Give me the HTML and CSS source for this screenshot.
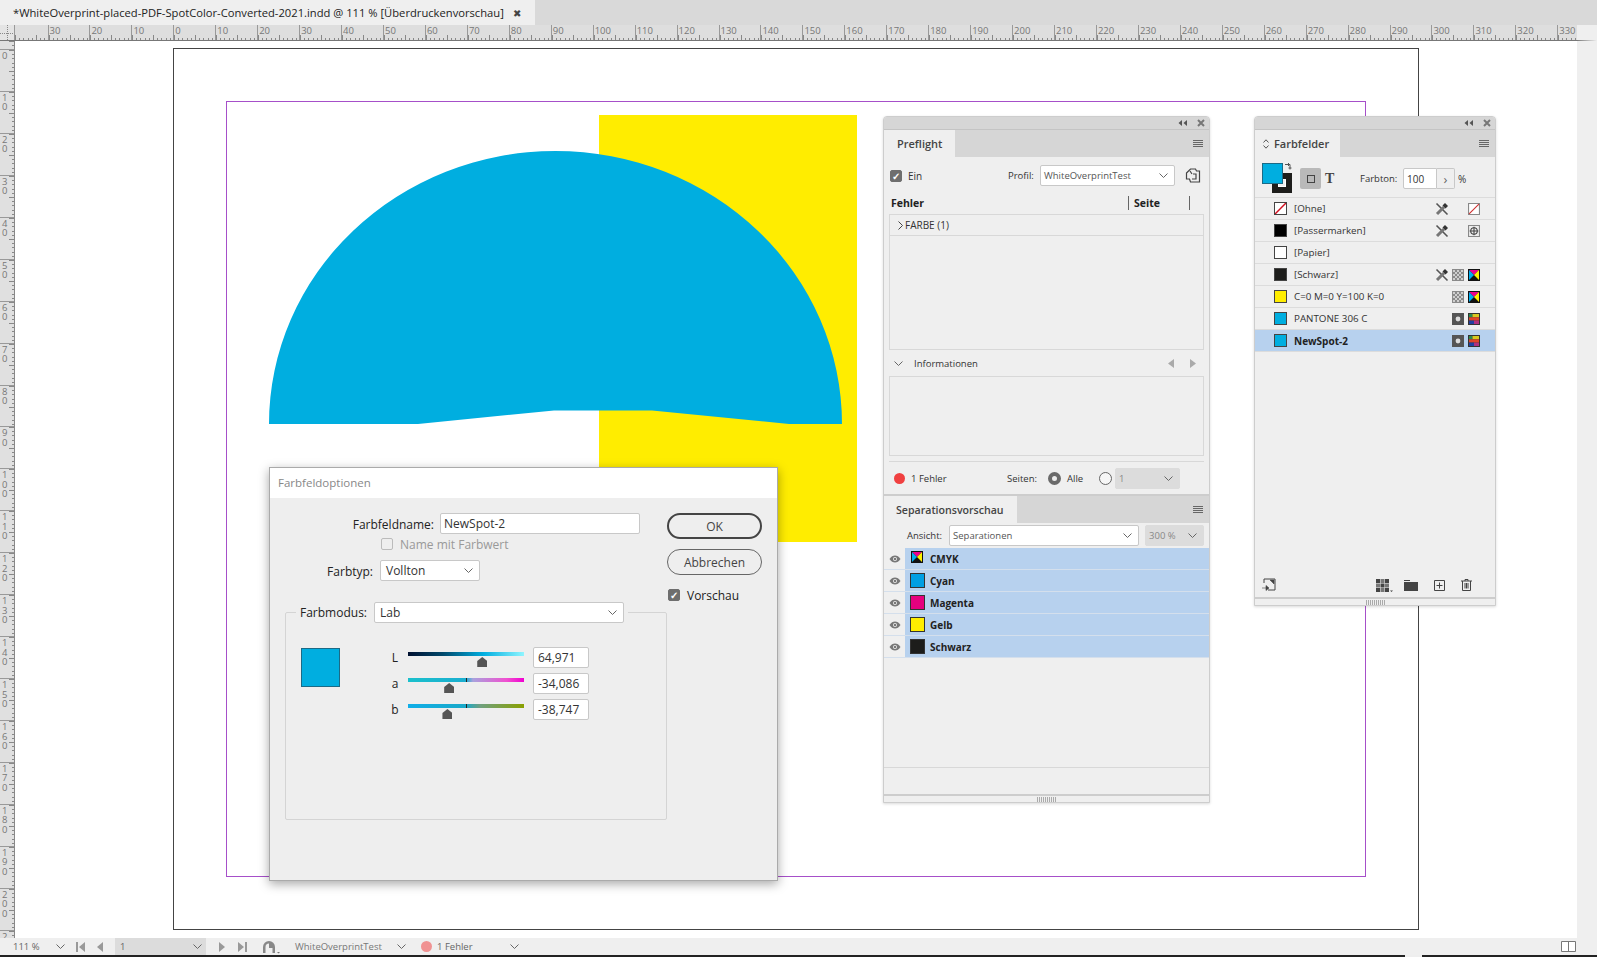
FILE: index.html
```html
<!DOCTYPE html>
<html lang="de">
<head>
  <meta charset="UTF-8">
  <title>Farbfeldoptionen</title>
  <link rel="stylesheet" href="styles.css">
</head>
<body>
  <svg class="defs" width="0" height="0">
    <symbol id="cmyk" viewBox="0 0 12 12">
      <rect width="12" height="12" fill="#111"/>
      <path d="M1 1h10L6 6z" fill="#ec008c"/>
      <path d="M1 1v10L6 6z" fill="#00aeef"/>
      <path d="M11 1v10L6 6z" fill="#fff200"/>
    </symbol>
    <symbol id="spot" viewBox="0 0 12 12">
      <rect width="12" height="12" fill="#555"/>
      <circle cx="6" cy="6" r="2.400" fill="#ddd"/>
    </symbol>
    <symbol id="lab" viewBox="0 0 12 12">
      <rect width="12" height="12" fill="#333"/>
      <rect x="1" y="1" width="3.500" height="3.300" fill="#2a8a50"/>
      <rect x="4.500" y="1" width="6.500" height="3.300" fill="#d8c820"/>
      <rect x="1" y="4.300" width="10" height="3.300" fill="#e04428"/>
      <rect x="1" y="7.600" width="5" height="3.400" fill="#2040a0"/>
      <rect x="6" y="7.600" width="5" height="3.400" fill="#b03080"/>
    </symbol>
    <symbol id="halftone" viewBox="0 0 12 12">
      <rect width="12" height="12" fill="#8a8a8a"/>
      <path d="M1 1h2v2H1zM5 1h2v2H5zM9 1h2v2H9zM3 3h2v2H3zM7 3h2v2H7zM1 5h2v2H1zM5 5h2v2H5zM9 5h2v2H9zM3 7h2v2H3zM7 7h2v2H7zM1 9h2v2H1zM5 9h2v2H5zM9 9h2v2H9z" fill="#cfcfcf"/>
    </symbol>
    <symbol id="nopencil" viewBox="0 0 14 14">
      <path d="M1.500 1.500l11 11" stroke="#555" stroke-width="1.600" fill="none"/>
      <path d="M2 12L9 5" stroke="#777" stroke-width="3" fill="none"/>
      <path d="M7.500 3.500l3 3L13 4 10 1z" fill="#333"/>
    </symbol>
    <symbol id="eye" viewBox="0 0 12 8">
      <path d="M.5 4C2 1.500 4 .5 6 .5s4 1 5.500 3.500C10 6.500 8 7.500 6 7.500S2 6.500.5 4z" fill="#777"/>
      <circle cx="6" cy="4" r="2" fill="#e6e6e6"/>
      <circle cx="6" cy="4" r="1" fill="#555"/>
    </symbol>
    <symbol id="chev" viewBox="0 0 9 5">
      <path d="M.5.5L4.500 4.500 8.500.5" fill="none" stroke="currentColor"/>
    </symbol>
    <symbol id="winbtns" viewBox="0 0 34 8">
      <path d="M11 1v6L7.500 4zM16 1v6l-3.500-3z" fill="#555"/>
      <path d="M27 1l6 6M33 1l-6 6" stroke="#777" stroke-width="2"/>
    </symbol>
  </svg>

  <div class="doc-tabs">
    <div class="doc-tab">*WhiteOverprint-placed-PDF-SpotColor-Converted-2021.indd @ 111 % [Überdruckenvorschau] <span class="doc-close">✖</span></div>
  </div>

  <div class="ruler-h">
    <div class="ruler-corner"></div>
    <span class="rh first"></span>
    <span class="rh">30</span><span class="rh">20</span><span class="rh">10</span><span class="rh">0</span>
    <span class="rh">10</span><span class="rh">20</span><span class="rh">30</span><span class="rh">40</span><span class="rh">50</span>
    <span class="rh">60</span><span class="rh">70</span><span class="rh">80</span><span class="rh">90</span><span class="rh">100</span>
    <span class="rh">110</span><span class="rh">120</span><span class="rh">130</span><span class="rh">140</span><span class="rh">150</span>
    <span class="rh">160</span><span class="rh">170</span><span class="rh">180</span><span class="rh">190</span><span class="rh">200</span>
    <span class="rh">210</span><span class="rh">220</span><span class="rh">230</span><span class="rh">240</span><span class="rh">250</span>
    <span class="rh">260</span><span class="rh">270</span><span class="rh">280</span><span class="rh">290</span><span class="rh">300</span>
    <span class="rh">310</span><span class="rh">320</span><span class="rh">330</span>
  </div>

  <div class="middle">
    <div class="ruler-v">
      <span class="rv first"></span>
      <span class="rv">0</span><span class="rv">10</span><span class="rv">20</span><span class="rv">30</span><span class="rv">40</span>
      <span class="rv">50</span><span class="rv">60</span><span class="rv">70</span><span class="rv">80</span><span class="rv">90</span>
      <span class="rv">100</span><span class="rv">110</span><span class="rv">120</span><span class="rv">130</span><span class="rv">140</span>
      <span class="rv">150</span><span class="rv">160</span><span class="rv">170</span><span class="rv">180</span><span class="rv">190</span>
      <span class="rv">200</span><span class="rv">210</span>
    </div>
    <div class="canvas"></div>
    <div class="side-strip"></div>
  </div>

  <div class="status">
    <span class="sb-zoom">111 %</span>
    <span class="sb-chev1"><svg class="chev"><use href="#chev"/></svg></span>
    <span class="sb-first"><svg width="9" height="10" viewBox="0 0 9 10"><path d="M0 0h2v10H0zM9 0v10L3 5z" fill="#999"/></svg></span>
    <span class="sb-prev"><svg width="6" height="10" viewBox="0 0 6 10"><path d="M6 0v10L0 5z" fill="#999"/></svg></span>
    <span class="sb-select">1 <svg class="chev"><use href="#chev"/></svg></span>
    <span class="sb-next"><svg width="6" height="10" viewBox="0 0 6 10"><path d="M0 0v10l6-5z" fill="#999"/></svg></span>
    <span class="sb-last"><svg width="9" height="10" viewBox="0 0 9 10"><path d="M0 0v10l6-5zM7 0h2v10H7z" fill="#999"/></svg></span>
    <span class="sb-pf"><svg width="18" height="14" viewBox="0 0 18 14"><path d="M1 13V7a6 6 0 0 1 12 0v6h-2.500V8H7V3.500A3.500 3.500 0 0 0 3.500 7v6z" fill="#888"/><path d="M15 12h3l-1.500 1.500z" fill="#777"/></svg></span>
    <span class="sb-profile">WhiteOverprintTest</span>
    <span class="sb-chev"><svg class="chev"><use href="#chev"/></svg></span>
    <span class="sb-dot"></span>
    <span class="sb-err">1 Fehler</span>
    <span class="sb-chev"><svg class="chev"><use href="#chev"/></svg></span>
    <span class="sb-fill"></span>
    <svg class="sb-split" viewBox="0 0 15 11"><path d="M.5.5h14v10H.5zM7.500.5v10" fill="#fff" stroke="#777"/></svg>
  </div>
  <div class="taskbar"><span class="taskbar-gap"></span></div>

  <!-- Dokumentseite -->
  <div class="page"></div>
  <div class="margins"></div>
  <div class="yellow"></div>
  <svg class="shape" viewBox="0 0 1597 957" width="1597" height="957">
    <path d="M269 424A286.500 273 0 0 1 842 424H789L652 410.500H554L418 424Z" fill="#00aee0"/>
  </svg>

  <!-- Farbfeldoptionen -->
  <div class="dialog">
    <div class="dialog-title">Farbfeldoptionen</div>
    <div class="dialog-body">
      <div class="dialog-form">
        <div class="form-row">
          <label class="lbl lbl-name">Farbfeldname:</label>
          <div class="field field-name">NewSpot-2</div>
        </div>
        <div class="check-row disabled">
          <span class="box"></span>
          <span>Name mit Farbwert</span>
        </div>
        <div class="form-row type-row">
          <label class="lbl lbl-type">Farbtyp:</label>
          <div class="field field-type">Vollton <svg class="chev"><use href="#chev"/></svg></div>
        </div>
        <fieldset class="mode">
          <legend class="mode-legend">
            <span>Farbmodus:</span>
            <span class="field field-mode">Lab <svg class="chev"><use href="#chev"/></svg></span>
          </legend>
          <div class="mode-body">
            <div class="mode-swatch"></div>
            <div class="sliders">
              <div class="slider-row">
                <span class="slider-lbl">L</span>
                <div class="slider slider-l"><i class="thumb" style="left: 64%"></i></div>
                <div class="field field-num">64,971</div>
              </div>
              <div class="slider-row">
                <span class="slider-lbl">a</span>
                <div class="slider slider-a"><b class="mid"></b><i class="thumb" style="left: 35.500%"></i></div>
                <div class="field field-num">-34,086</div>
              </div>
              <div class="slider-row">
                <span class="slider-lbl">b</span>
                <div class="slider slider-b"><b class="mid"></b><i class="thumb" style="left: 34%"></i></div>
                <div class="field field-num">-38,747</div>
              </div>
            </div>
          </div>
        </fieldset>
      </div>
      <div class="dialog-side">
        <button class="btn btn-ok">OK</button>
        <button class="btn">Abbrechen</button>
        <div class="check-row preview">
          <span class="box on">✓</span>
          <span>Vorschau</span>
        </div>
      </div>
    </div>
  </div>

  <!-- Preflight + Separationsvorschau -->
  <div class="panel panel-pf">
    <div class="panel-head"><svg class="winbtns"><use href="#winbtns"/></svg></div>
    <div class="panel-tabs">
      <div class="panel-tab tab-pf">Preflight</div>
      <div class="menu"><i></i><i></i><i></i><i></i></div>
    </div>
    <div class="pf-top">
      <span class="box on">✓</span>
      <span class="pf-ein">Ein</span>
      <span class="pf-profil">Profil:</span>
      <span class="field field-profil">WhiteOverprintTest <svg class="chev"><use href="#chev"/></svg></span>
      <svg class="pf-doc" width="16" height="16" viewBox="0 0 16 16"><path d="M1.500 5l4-4h5l1 2h3v11h-9l-1-3h-3zM8 6h3v5H7M5 3l2 3" fill="none" stroke="#444" stroke-width="1.200"/></svg>
    </div>
    <div class="pf-cols">
      <span class="pf-col-err">Fehler</span>
      <span class="pf-col-page">Seite</span>
    </div>
    <div class="pf-list">
      <div class="pf-item"><svg width="5" height="9" viewBox="0 0 5 9"><path d="M.5.5l4 4-4 4" fill="none" stroke="#444"/></svg> FARBE (1)</div>
    </div>
    <div class="pf-info">
      <svg class="chev"><use href="#chev"/></svg>
      <span class="pf-info-txt">Informationen</span>
      <svg class="pf-arrow" width="6" height="9" viewBox="0 0 6 9"><path d="M6 0v9L0 4.500z" fill="#aaa"/></svg>
      <svg class="pf-arrow" width="6" height="9" viewBox="0 0 6 9"><path d="M0 0v9l6-4.500z" fill="#aaa"/></svg>
    </div>
    <div class="pf-infobox"></div>
    <div class="pf-status">
      <span class="err-dot"></span>
      <span class="err-txt">1 Fehler</span>
      <span class="seiten">Seiten:</span>
      <span class="radio on"></span>
      <span class="alle">Alle</span>
      <span class="radio"></span>
      <span class="field field-dis field-page">1 <svg class="chev"><use href="#chev"/></svg></span>
    </div>

    <div class="sep-split"></div>
    <div class="panel-tabs tabs-sep">
      <div class="panel-tab tab-sep">Separationsvorschau</div>
      <div class="menu"><i></i><i></i><i></i><i></i></div>
    </div>
    <div class="sep-view">
      <span>Ansicht:</span>
      <span class="field field-view">Separationen <svg class="chev"><use href="#chev"/></svg></span>
      <span class="field field-dis field-pct">300 % <svg class="chev"><use href="#chev"/></svg></span>
    </div>
    <div class="sep-list">
      <div class="sep-row"><span class="sep-eye"><svg width="12" height="8"><use href="#eye"/></svg></span><span class="sep-name"><svg class="sep-cmyk"><use href="#cmyk"/></svg>CMYK</span></div>
      <div class="sep-row"><span class="sep-eye"><svg width="12" height="8"><use href="#eye"/></svg></span><span class="sep-name"><i class="sep-swatch sw-cyan"></i>Cyan</span></div>
      <div class="sep-row"><span class="sep-eye"><svg width="12" height="8"><use href="#eye"/></svg></span><span class="sep-name"><i class="sep-swatch sw-magenta"></i>Magenta</span></div>
      <div class="sep-row"><span class="sep-eye"><svg width="12" height="8"><use href="#eye"/></svg></span><span class="sep-name"><i class="sep-swatch sw-yellow"></i>Gelb</span></div>
      <div class="sep-row"><span class="sep-eye"><svg width="12" height="8"><use href="#eye"/></svg></span><span class="sep-name"><i class="sep-swatch sw-black"></i>Schwarz</span></div>
    </div>
    <div class="sep-fill"></div>
    <div class="sep-foot"></div>
    <div class="panel-grip"><span class="grip"></span></div>
  </div>

  <!-- Farbfelder -->
  <div class="panel panel-ff">
    <div class="panel-head"><svg class="winbtns"><use href="#winbtns"/></svg></div>
    <div class="panel-tabs">
      <div class="panel-tab tab-ff">
        <svg width="6" height="10" viewBox="0 0 6 10"><path d="M.5 3.500L3 .8l2.500 2.700M.5 6.500L3 9.200l2.500-2.700" fill="none" stroke="#555"/></svg>
        Farbfelder
      </div>
      <div class="menu"><i></i><i></i><i></i><i></i></div>
    </div>
    <div class="ff-tools">
      <div class="proxy"><span class="proxy-stroke"></span><span class="proxy-fill"></span>
        <svg class="proxy-swap" width="7" height="7" viewBox="0 0 7 7"><path d="M0 1.500h5v5M3.500 0v3M3.500 5h3" fill="none" stroke="#555"/></svg>
      </div>
      <div class="fmt-btn"><i></i></div>
      <span class="fmt-t">T</span>
      <span class="tint-lbl">Farbton:</span>
      <span class="field field-tint">100</span><span class="tint-step">›</span>
      <span class="tint-pct">%</span>
    </div>
    <div class="ff-list">
      <div class="ff-row">
        <svg class="ff-swatch" viewBox="0 0 13 13"><rect width="13" height="13" fill="#fff"/><path d="M0 13L13 0" stroke="#d01020" stroke-width="1.500"/><rect x=".5" y=".5" width="12" height="12" fill="none" stroke="#444"/></svg>
        <span class="ff-name">[Ohne]</span>
        <span class="ff-slot"><svg class="ff-pencil"><use href="#nopencil"/></svg></span><span class="ff-slot"></span>
        <span class="ff-slot"><svg class="ff-icon" viewBox="0 0 11 11"><path d="M.5.5h10v10H.5z" fill="#fff" stroke="#888"/><path d="M1 10L10 1" stroke="#d03030"/></svg></span>
      </div>
      <div class="ff-row">
        <i class="ff-swatch sw-reg"></i>
        <span class="ff-name">[Passermarken]</span>
        <span class="ff-slot"><svg class="ff-pencil"><use href="#nopencil"/></svg></span><span class="ff-slot"></span>
        <span class="ff-slot"><svg class="ff-icon" viewBox="0 0 11 11"><path d="M.5.5h10v10H.5z" fill="#eee" stroke="#888"/><circle cx="5.500" cy="5.500" r="3" fill="none" stroke="#444"/><path d="M5.500 1.500v8M1.500 5.500h8" stroke="#444"/></svg></span>
      </div>
      <div class="ff-row">
        <i class="ff-swatch sw-paper"></i>
        <span class="ff-name">[Papier]</span>
      </div>
      <div class="ff-row">
        <i class="ff-swatch sw-black"></i>
        <span class="ff-name">[Schwarz]</span>
        <span class="ff-slot"><svg class="ff-pencil"><use href="#nopencil"/></svg></span>
        <span class="ff-slot"><svg class="ff-icon"><use href="#halftone"/></svg></span>
        <span class="ff-slot"><svg class="ff-icon"><use href="#cmyk"/></svg></span>
      </div>
      <div class="ff-row">
        <i class="ff-swatch sw-yellow"></i>
        <span class="ff-name">C=0 M=0 Y=100 K=0</span>
        <span class="ff-slot"><svg class="ff-icon"><use href="#halftone"/></svg></span>
        <span class="ff-slot"><svg class="ff-icon"><use href="#cmyk"/></svg></span>
      </div>
      <div class="ff-row">
        <i class="ff-swatch sw-spot"></i>
        <span class="ff-name">PANTONE 306 C</span>
        <span class="ff-slot"><svg class="ff-icon"><use href="#spot"/></svg></span>
        <span class="ff-slot"><svg class="ff-icon"><use href="#lab"/></svg></span>
      </div>
      <div class="ff-row selected">
        <i class="ff-swatch sw-spot"></i>
        <span class="ff-name">NewSpot-2</span>
        <span class="ff-slot"><svg class="ff-icon"><use href="#spot"/></svg></span>
        <span class="ff-slot"><svg class="ff-icon"><use href="#lab"/></svg></span>
      </div>
    </div>
    <div class="ff-fill"></div>
    <div class="ff-foot">
      <svg width="14" height="14" viewBox="0 0 14 14"><path d="M2 5V1h11v11H6" fill="none" stroke="#444"/><path d="M8 2h4v4zM0 10h6M4 7.500L7 10l-3 2.500z" fill="#444" stroke="#444" stroke-width=".6"/></svg>
      <span class="ff-foot-gap"></span>
      <svg class="ff-grid" width="17" height="13" viewBox="0 0 17 13"><path d="M0 0h4v4H0zM9 0h4v4H9zM4.500 4.500h4v4h-4zM0 9h4v4H0zM9 9h4v4H9z" fill="#444"/><path d="M4.500 0h4v4h-4zM0 4.500h4v4H0zM9 4.500h4v4H9zM4.500 9h4v4h-4z" fill="#777"/><path d="M14 11.500h3l-1.500 1.500z" fill="#444"/></svg>
      <svg width="14" height="11" viewBox="0 0 14 11"><path d="M0 0h6v1H0zM0 2h14v9H0z" fill="#444"/></svg>
      <svg width="11" height="11" viewBox="0 0 11 11"><path d="M.5.5h10v10H.5zM5.500 2.500v6M2.500 5.500h6" fill="none" stroke="#444"/></svg>
      <svg width="11" height="12" viewBox="0 0 11 12"><path d="M0 2h11M4 2V.5h3V2M1.500 2v9.500h8V2M4 4v5.500M5.500 4v5.500M7 4v5.500" fill="none" stroke="#444"/></svg>
    </div>
    <div class="panel-grip"><span class="grip"></span></div>
  </div>
</body>
</html>
```

FILE: styles.css
```css
* {
  box-sizing: border-box;
}

body {
  position: relative;
  display: flex;
  flex-direction: column;
  width: 1597px;
  height: 957px;
  margin: 0;
  overflow: hidden;
  background-color: #fff;
  font-family: "Open Sans", "Noto Sans", sans-serif;
  font-size: 11px;
  color: #333;
}

.defs {
  position: absolute;
}

.chev {
  width: 9px;
  height: 5px;
  color: #666;
  flex: none;
}

/* Dokument-Tab */
.doc-tabs {
  flex: 0 0 25px;
  background-color: #d9d9d9;
}

.doc-tab {
  display: flex;
  align-items: center;
  width: 535px;
  height: 25px;
  padding-left: 13px;
  background-color: #efefef;
  font-size: 11.200px;
  color: #222;
  white-space: pre;
}

.doc-close {
  margin-left: 6px;
  font-size: 10px;
  color: #444;
}

/* Lineale */
.ruler-h {
  display: flex;
  flex: 0 0 16px;
  background-color: #dedede;
  border-right: 20px solid #efefef;
  border-bottom: 1px solid #777;
  overflow: hidden;
}

.ruler-corner {
  flex: 0 0 15px;
  background:
    repeating-linear-gradient(to right, #888 0 1px, transparent 1px 2px) left 8px / 100% 1px no-repeat,
    repeating-linear-gradient(to bottom, #888 0 1px, transparent 1px 2px) 7px top / 1px 100% no-repeat,
    #e4e4e4;
  border-right: 1px solid #999;
}

.rh {
  flex: 0 0 41.940px;
  padding-left: 1px;
  border-left: 1px solid #999;
  font-size: 9.500px;
  line-height: 11px;
  color: #777;
  background:
    repeating-linear-gradient(to right, #888 0 1px, transparent 1px 20.970px) left bottom / 100% 5px no-repeat,
    repeating-linear-gradient(to right, #888 0 1px, transparent 1px 4.194px) left bottom / 100% 2px no-repeat;
}

.rh.first {
  flex-basis: 32.500px;
  border-left: 0;
}

.middle {
  display: flex;
  flex: 1;
  min-height: 0;
}

.ruler-v {
  display: flex;
  flex-direction: column;
  flex: 0 0 15px;
  overflow: hidden;
  background-color: #e0e0e0;
  border-right: 1px solid #888;
}

.rv {
  flex: 0 0 41.940px;
  width: 100%;
  padding: 1px 6px 0 2px;
  border-top: 1px solid #999;
  font-size: 9.500px;
  line-height: 9.500px;
  color: #777;
  word-break: break-all;
  background:
    repeating-linear-gradient(to bottom, #888 0 1px, transparent 1px 20.970px) right top / 5px 100% no-repeat,
    repeating-linear-gradient(to bottom, #888 0 1px, transparent 1px 4.194px) right top / 2px 100% no-repeat;
}

.rv.first {
  flex-basis: 8px;
  border-top: 0;
}

.canvas {
  flex: 1;
  background-color: #fff;
}

.side-strip {
  flex: 0 0 20px;
  background-color: #efefef;
}

/* Statusleiste */
.status {
  display: flex;
  align-items: center;
  flex: 0 0 17px;
  padding-left: 13px;
  background-color: #efefef;
  font-size: 9.500px;
  color: #666;
}

.sb-zoom { width: 43px; }
.sb-chev1 { display: flex; width: 20px; }
.sb-first { display: flex; width: 21px; }
.sb-prev { display: flex; width: 18px; }

.sb-select {
  display: flex;
  align-items: center;
  justify-content: space-between;
  width: 91px;
  height: 17px;
  padding: 0 4px 0 5px;
  background-color: #dcdcdc;
}

.sb-next { display: flex; width: 32px; padding-left: 13px; }
.sb-last { display: flex; width: 24px; }
.sb-pf { display: flex; width: 33px; }
.sb-profile { width: 102px; color: #777; }
.sb-chev { display: flex; width: 24px; }
.sb-err { width: 73px; margin-left: 5px; }

.sb-dot {
  width: 11px;
  height: 11px;
  border-radius: 50%;
  background-color: #f09292;
}

.sb-fill { flex: 1; }

.sb-split {
  width: 15px;
  height: 11px;
  margin-right: 21px;
}

.taskbar {
  flex: 0 0 2px;
  padding-left: 1405px;
  background-color: #222;
}

.taskbar-gap {
  display: block;
  width: 17px;
  height: 2px;
  background-color: #eee;
}

/* Dokumentseite: freie Flaeche */
.page {
  position: absolute;
  left: 173px;
  top: 48px;
  width: 1246px;
  height: 882px;
  border: 1.500px solid #444;
}

.margins {
  position: absolute;
  left: 226px;
  top: 101px;
  width: 1140px;
  height: 776px;
  border: 1px solid #a64fc9;
}

.yellow {
  position: absolute;
  left: 599px;
  top: 115px;
  width: 258px;
  height: 427px;
  background-color: #ffed00;
}

.shape {
  position: absolute;
  left: 0;
  top: 0;
}

/* gemeinsame Felder */
.field {
  display: flex;
  align-items: center;
  justify-content: space-between;
  height: 21px;
  padding: 0 6px 0 3px;
  background-color: #fff;
  border: 1px solid #c8c8c8;
  border-radius: 2px;
  color: #333;
}

.field-dis {
  background-color: #dcdcdc;
  border-color: #dcdcdc;
  color: #888;
}

.box {
  display: flex;
  align-items: center;
  justify-content: center;
  flex: none;
  width: 12px;
  height: 12px;
  background-color: #eee;
  border: 1px solid #bbb;
  border-radius: 2px;
  font-size: 10px;
  font-weight: 700;
  color: #fff;
}

.box.on {
  background-color: #6e6e6e;
  border-color: #6e6e6e;
}

/* Dialog */
.dialog {
  position: absolute;
  left: 269px;
  top: 467px;
  width: 509px;
  height: 414px;
  background-color: #eee;
  border: 1px solid #aaa;
  box-shadow: 0 3px 10px rgba(0, 0, 0, 0.35);
  font-size: 12px;
  color: #222;
}

.dialog-title {
  height: 30px;
  padding: 7px 0 0 8px;
  background-color: #fff;
  font-size: 11.500px;
  color: #888;
}

.dialog-body {
  display: flex;
  padding: 15px 0 0 15px;
}

.dialog-form {
  width: 382px;
}

.form-row {
  display: flex;
  align-items: center;
}

.lbl {
  padding-top: 2px;
  text-align: right;
}

.lbl-name { width: 149px; margin-right: 6px; }
.lbl-type { width: 88px; margin-right: 7px; }
.field-name { width: 200px; }
.field-type { width: 100px; padding-left: 5px; }

.check-row {
  display: flex;
  align-items: center;
  gap: 7px;
  height: 12px;
}

.dialog-form .check-row {
  margin: 4px 0 0 96px;
}

.check-row.disabled {
  color: #999;
}

.type-row {
  margin-top: 10px;
}

.mode {
  width: 382px;
  height: 218px;
  margin: 21px 0 0;
  padding: 0;
  border: 1px solid #d4d4d4;
  border-radius: 2px;
}

.mode-legend {
  display: flex;
  align-items: center;
  gap: 7px;
  margin-left: 10px;
  padding: 0 4px;
}

.field-mode {
  width: 250px;
  padding-left: 5px;
}

.mode-body {
  display: flex;
  padding: 24px 0 0 15px;
}

.mode-swatch {
  flex: none;
  width: 39px;
  height: 39px;
  margin-top: 1px;
  background-color: #00aee0;
  border: 1px solid #1b6a86;
}

.sliders {
  display: flex;
  flex-direction: column;
  gap: 5px;
  margin-left: 45px;
}

.slider-row {
  display: flex;
  align-items: center;
  height: 21px;
}

.slider-lbl {
  width: 16px;
  padding-left: 4px;
  text-align: center;
}

.slider {
  position: relative;
  width: 116px;
  height: 4px;
  margin: -7px 9px 0 7px;
}

.slider-l { background: linear-gradient(90deg, #001030, #00486b 30%, #00aee0 65%, #8ff5ff); }
.slider-a { background: linear-gradient(90deg, #1bc0cc, #1aaed0 50%, #a9a2dd 56%, #f050d0 85%, #f000d0); }
.slider-b { background: linear-gradient(90deg, #10aee8, #1aa9c8 50%, #6fa080 62%, #8aa000); }

.mid {
  position: absolute;
  left: 50%;
  top: 0;
  width: 1px;
  height: 4px;
  background-color: #222;
}

.thumb {
  position: absolute;
  top: 5px;
  width: 10px;
  height: 10px;
  margin-left: -5px;
  background-color: #555;
  clip-path: polygon(50% 0, 100% 40%, 100% 100%, 0 100%, 0 40%);
}

.field-num {
  width: 56px;
  padding-left: 4px;
}

.dialog-side {
  display: flex;
  flex-direction: column;
  width: 95px;
}

.btn {
  height: 26px;
  padding: 0;
  background-color: transparent;
  border: 1px solid #666;
  border-radius: 13px;
  font-family: inherit;
  font-size: 12px;
  color: #444;
}

.btn + .btn {
  margin-top: 10px;
}

.btn-ok {
  border: 2px solid #444;
}

.preview {
  margin: 14px 0 0 1px;
}

/* Panels */
.panel {
  position: absolute;
  top: 116px;
  display: flex;
  flex-direction: column;
  background-color: #efefef;
  border: 1px solid #cdcdcd;
  border-radius: 4px 4px 0 0;
  box-shadow: 0 1px 3px rgba(0, 0, 0, 0.15);
  font-size: 10px;
  color: #333;
}

.panel-pf {
  left: 883px;
  width: 327px;
  height: 687px;
}

.panel-ff {
  left: 1254px;
  width: 242px;
  height: 490px;
}

.panel-head {
  display: flex;
  align-items: center;
  justify-content: flex-end;
  flex: 0 0 13px;
  padding-right: 4px;
  background-color: #d6d6d6;
  border-radius: 3px 3px 0 0;
  border-bottom: 1px solid #c4c4c4;
}

.winbtns {
  width: 34px;
  height: 8px;
}

.panel-tabs {
  display: flex;
  align-items: center;
  justify-content: space-between;
  flex: 0 0 27px;
  padding-right: 6px;
  background-color: #d6d6d6;
}

.panel-tab {
  display: flex;
  align-items: center;
  height: 100%;
  background-color: #efefef;
  font-size: 11px;
  font-weight: 600;
  color: #444;
}

.tab-pf { width: 71px; padding-left: 13px; }
.tab-sep { width: 133px; padding-left: 12px; font-size: 10.600px; }
.tab-ff { width: 85px; padding-left: 8px; gap: 5px; }

.menu {
  display: flex;
  flex-direction: column;
  gap: 1px;
  width: 10px;
}

.menu i {
  height: 1px;
  background-color: #666;
}

/* Preflight */
.pf-top {
  display: flex;
  align-items: center;
  flex: 0 0 21px;
  margin-top: 8px;
  padding-left: 6px;
}

.pf-ein { width: 20px; margin-left: 6px; }
.pf-profil { width: 25px; margin-left: 80px; font-size: 9.500px; white-space: nowrap; }
.field-profil { flex: none; width: 135px; margin-left: 7px; font-size: 9.500px; color: #555; }
.pf-doc { flex: none; margin-left: 10px; }

.pf-cols {
  display: flex;
  align-items: center;
  flex: 0 0 17px;
  margin-top: 8px;
  padding-left: 7px;
  font-size: 10.500px;
  font-weight: 700;
  color: #222;
}

.pf-col-err { width: 237px; }

.pf-col-page {
  width: 62px;
  padding-left: 5px;
  border-left: 1px solid #666;
  border-right: 1px solid #666;
}

.pf-list {
  flex: 0 0 136px;
  margin: 3px 5px 0;
  border: 1px solid #d8d8d8;
}

.pf-item {
  display: flex;
  align-items: center;
  gap: 2px;
  height: 21px;
  padding-left: 8px;
  border-bottom: 1px solid #d8d8d8;
}

.pf-info {
  display: flex;
  align-items: center;
  flex: 0 0 26px;
  padding: 0 13px 0 10px;
}

.pf-info-txt { flex: 1; margin-left: 11px; font-size: 9.500px; }
.pf-arrow + .pf-arrow { margin-left: 16px; }

.pf-infobox {
  flex: 0 0 80px;
  margin: 0 5px;
  border: 1px solid #d8d8d8;
}

.pf-status {
  display: flex;
  align-items: center;
  flex: 0 0 33px;
  margin: 5px 5px 0;
  padding-left: 5px;
  border-top: 1px solid #d8d8d8;
  font-size: 9.500px;
}

.err-dot {
  width: 11px;
  height: 11px;
  border-radius: 50%;
  background-color: #f04040;
}

.err-txt { width: 96px; margin-left: 6px; }
.seiten { width: 41px; }
.alle { width: 32px; margin-left: 6px; }

.radio {
  flex: none;
  width: 13px;
  height: 13px;
  background-color: #f6f6f6;
  border: 1px solid #666;
  border-radius: 50%;
}

.radio.on {
  background-color: #eee;
  border: 4px solid #6a6a6a;
}

.field-page {
  width: 65px;
  margin-left: 3px;
}

/* Separationsvorschau */
.sep-split {
  flex: 0 0 2px;
  background-color: #cdcdcd;
}

.sep-view {
  display: flex;
  align-items: center;
  flex: 0 0 25px;
  padding-left: 23px;
  font-size: 9.500px;
}

.field-view { width: 190px; margin-left: 7px; color: #555; }
.field-pct { width: 59px; margin-left: 6px; }

.sep-list {
  flex: none;
}

.sep-row {
  display: flex;
  height: 22px;
  border-bottom: 1px solid #d4dfec;
}

.sep-eye {
  display: flex;
  align-items: center;
  justify-content: center;
  width: 21px;
  height: 21px;
  padding-left: 1px;
}

.sep-name {
  display: flex;
  align-items: center;
  flex: 1;
  gap: 5px;
  padding-left: 5px;
  background-color: #b7d1ee;
  font-weight: 700;
  color: #222;
}

.sep-swatch {
  width: 15px;
  height: 15px;
  border: 1px solid #333;
}

.sep-cmyk {
  width: 12px;
  height: 12px;
  margin: 0 2px 3px 1px;
}

.sw-cyan { background-color: #009fe3; }
.sw-magenta { background-color: #e6007e; }
.sw-yellow { background-color: #ffed00; }
.sw-black { background-color: #1d1d1b; }

.sep-fill {
  flex: 1;
  border-bottom: 1px solid #d8d8d8;
}

.sep-foot {
  flex: 0 0 26px;
}

.panel-grip {
  display: flex;
  align-items: center;
  justify-content: center;
  flex: 0 0 8px;
  border-top: 2px solid #cdcdcd;
}

.grip {
  width: 19px;
  height: 5px;
  background: repeating-linear-gradient(to right, #aaa 0 1px, transparent 1px 2px);
}

/* Farbfelder */
.ff-tools {
  display: flex;
  align-items: center;
  flex: 0 0 40px;
  padding: 3px 0 0 7px;
}

.proxy {
  position: relative;
  flex: none;
  width: 31px;
  height: 31px;
}

.proxy-fill {
  position: absolute;
  left: 0;
  top: 0;
  width: 21px;
  height: 21px;
  background-color: #00aee0;
  border: 1px solid #1b6a86;
}

.proxy-stroke {
  position: absolute;
  left: 10px;
  top: 10px;
  width: 20px;
  height: 20px;
  border: 6px solid #1d1d1b;
  outline: 1px solid #fff;
  outline-offset: -7px;
}

.proxy-swap {
  position: absolute;
  left: 23px;
  top: 0;
}

.fmt-btn {
  display: flex;
  align-items: center;
  justify-content: center;
  width: 21px;
  height: 21px;
  margin-left: 7px;
  background-color: #b9b9b9;
  border-radius: 2px;
}

.fmt-btn i {
  width: 8px;
  height: 8px;
  border: 1px solid #444;
}

.fmt-t {
  width: 14px;
  margin-left: 4px;
  font-family: "Liberation Serif", serif;
  font-size: 14px;
  font-weight: 700;
  color: #444;
}

.tint-lbl { width: 43px; margin-left: 21px; font-size: 9.500px; }

.field-tint {
  width: 34px;
  border-radius: 2px 0 0 2px;
}

.tint-step {
  display: flex;
  align-items: center;
  justify-content: center;
  width: 18px;
  height: 21px;
  border: 1px solid #c8c8c8;
  border-left: 0;
  border-radius: 0 2px 2px 0;
  font-size: 13px;
  color: #666;
}

.tint-pct { margin-left: 3px; }

.ff-list {
  border-top: 1px solid #dcdcdc;
}

.ff-row {
  display: flex;
  align-items: center;
  height: 22px;
  padding: 0 13px 0 19px;
  border-bottom: 1px solid #dcdcdc;
}

.ff-row.selected {
  background-color: #b7d1ee;
  color: #222;
}

.ff-row.selected .ff-name {
  font-size: 10px;
  font-weight: 700;
}

.ff-swatch {
  flex: none;
  width: 13px;
  height: 13px;
  border: 1px solid #444;
}

svg.ff-swatch {
  border: 0;
}

.sw-reg { background-color: #000; }
.sw-paper { background-color: #fff; }
.sw-spot { background-color: #00aee0; }

.ff-name {
  flex: 1;
  margin-left: 7px;
  font-size: 9.800px;
}

.ff-slot {
  display: flex;
  justify-content: center;
  width: 16px;
}

.ff-icon {
  width: 12px;
  height: 12px;
}

.ff-pencil {
  flex: none;
  width: 14px;
  height: 14px;
}

.ff-fill {
  flex: 1;
}

.ff-foot {
  display: flex;
  align-items: center;
  gap: 16px;
  flex: 0 0 26px;
  padding: 2px 23px 0 7px;
}

.ff-foot-gap {
  flex: 1;
}

.ff-grid {
  margin-right: -5px;
}
```
